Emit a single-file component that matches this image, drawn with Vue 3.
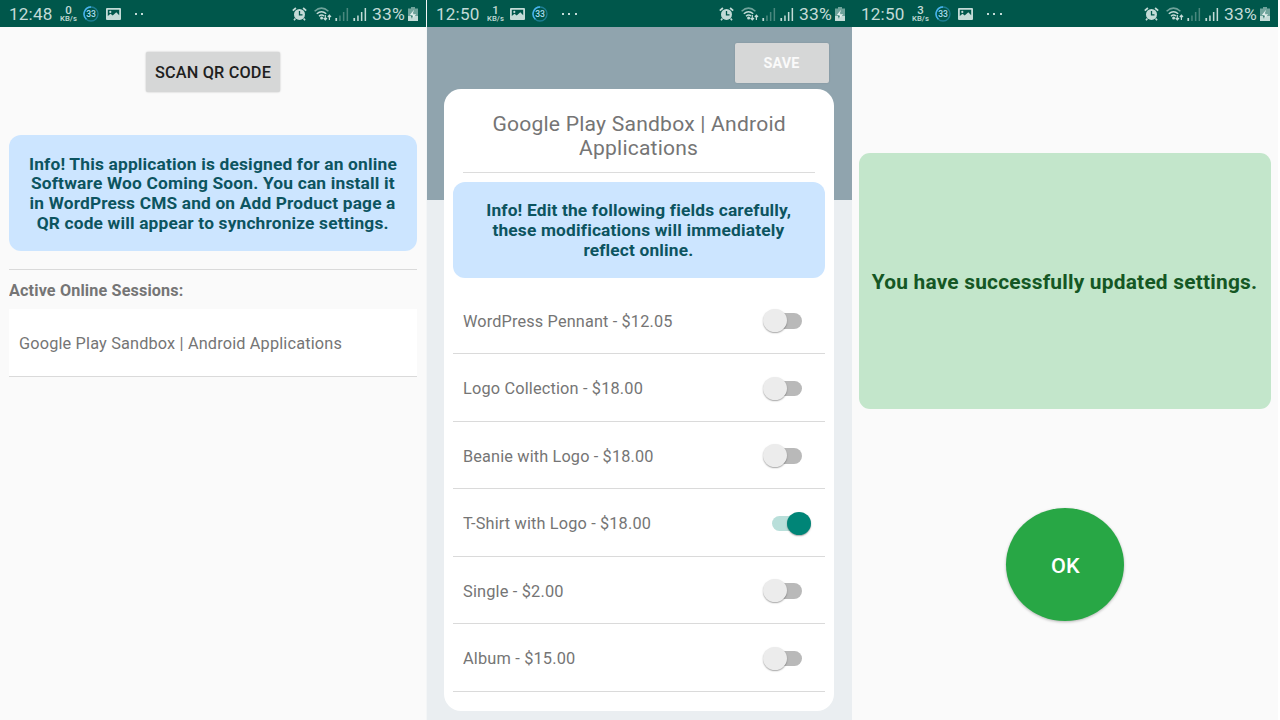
<script setup>
const phones = [
  { time: '12:48', rate: '0', icons: ['ring', 'image'], dots: 2 },
  { time: '12:50', rate: '1', icons: ['image', 'ring'], dots: 3 },
  { time: '12:50', rate: '3', icons: ['ring', 'image'], dots: 3 },
]

const scanInfo = [
  ['Info! This application is designed for an online', 368],
  ['Software Woo Coming Soon. You can install it', 364],
  ['in WordPress CMS and on Add Product page a', 366],
  ['QR code will appear to synchronize settings.', 352],
]
const editInfo = [
  ['Info! Edit the following fields carefully,', 305],
  ['these modifications will immediately', 292],
  ['reflect online.', 110],
]
const products = [
  { label: 'WordPress Pennant - $12.05', width: 209.5, on: false },
  { label: 'Logo Collection - $18.00', width: 180, on: false },
  { label: 'Beanie with Logo - $18.00', width: 190.5, on: false },
  { label: 'T-Shirt with Logo - $18.00', width: 188, on: true },
  { label: 'Single - $2.00', width: 100.7, on: false },
  { label: 'Album - $15.00', width: 112.4, on: false },
]

// Stretches a line of text horizontally to the given width.
const vFit = {
  mounted(el, { value }) {
    const natural = el.getBoundingClientRect().width
    if (natural) el.style.transform = `scaleX(${value / natural})`
  },
}
</script>

<template>
  <main class="board">
    <section v-for="(p, i) in phones" :key="i" class="phone" :class="'phone-' + (i + 1)">
      <header class="status">
        <span class="time"><span v-fit="43.5" class="t">{{ p.time }}</span></span>
        <span class="rate"><b>{{ p.rate }}</b><small><span v-fit="17" class="t">KB/s</span></small></span>
        <span class="notes">
          <template v-for="icon in p.icons" :key="icon">
            <svg v-if="icon === 'ring'" width="16" height="16" viewBox="0 0 16 16">
              <circle cx="8" cy="8" r="7" fill="none" stroke="#1c7d92" stroke-width="1.3" />
              <path d="M3.4 13.2A7 7 0 0 1 8 1" fill="none" stroke="#48b4ee" stroke-width="1.5" />
              <text x="8" y="10.9" text-anchor="middle" class="ring-text">33</text>
            </svg>
            <svg v-else width="15" height="12" viewBox="0 0 15 12">
              <path fill="#c3dbd7" fill-rule="evenodd" d="M1 0h13q1 0 1 1v10q0 1-1 1H1q-1 0-1-1V1q0-1 1-1zM1.8 1.7v6.2l2.7-2.2 2.2 1.8 3.6-3.3 2.9 3.1V1.7z" />
              <circle cx="4.3" cy="3.9" r="1.1" fill="#c3dbd7" />
            </svg>
          </template>
        </span>
        <span class="dots"><i v-for="n in p.dots" :key="n"></i></span>
        <span class="system">
          <svg width="15" height="14" viewBox="0 0 15 14">
            <g fill="none" stroke="#c3dbd7">
              <path d="M.8 3.6 3.9 1M14.2 3.6 11.1 1" stroke-width="1.8" />
              <path d="M3.4 11.5 2 13.3M11.6 11.5 13 13.3" stroke-width="1.6" />
            </g>
            <circle cx="7.5" cy="7.4" r="5.5" fill="#c3dbd7" />
            <path d="M7.5 4v3.8h3" fill="none" stroke="#00574b" stroke-width="1.3" />
          </svg>
          <svg class="wifi" width="18" height="14" viewBox="0 0 18 14">
            <g fill="none" stroke="#c3dbd7" stroke-width="1.5">
              <path d="M.6 4.2Q7.5-2 14.4 4.2" stroke="#6fa39b" />
              <path d="M2.8 6.8Q7.5 2.6 12.2 6.8M5 9.2Q7.5 7 10 9" />
              <path d="M11.3 8v4.7M9.6 11l1.7 1.8 1.7-1.8M15.4 13V8.3M13.8 10l1.6-1.8L17 10" stroke-width="1.2" />
            </g>
            <circle cx="7.6" cy="11.1" r="1.5" fill="#c3dbd7" />
          </svg>
          <svg class="weak" width="14" height="13" viewBox="0 0 14 13">
            <path fill="#c3dbd7" d="M.4 10h1.7v3H.4z" />
            <path fill="#4a887e" d="M4.2 7.5h1.5V13H4.2zM7.9 4h1.5v9H7.9zM11.6 0h1.5v13h-1.5z" />
          </svg>
          <svg class="strong" width="14" height="13" viewBox="0 0 14 13">
            <path fill="#c3dbd7" d="M.4 10h1.7v3H.4zM4.2 7.5h1.5V13H4.2zM7.9 4h1.5v9H7.9zM11.6 0h1.5v13h-1.5z" />
          </svg>
          <span class="percent"><span v-fit="33" class="t">33%</span></span>
          <svg width="10" height="14" viewBox="0 0 10 14">
            <path fill="#6fa39b" d="M3 0h4v1.5h3V9H0V1.5h3z" />
            <path fill="#c3dbd7" d="M0 9h10v5H0z" />
            <path fill="#e2efed" d="M6 2.8 1.9 8h2.7L4 10z M5.2 4.5v2.7h3L4 12z" />
            <path fill="#00574b" d="M3.2 9h1.4L4 12z" />
          </svg>
        </span>
      </header>

      <div v-if="i === 0" class="scan">
        <button class="btn scan-btn"><span v-fit="116" class="t c">SCAN QR CODE</span></button>
        <div class="info scan-info">
          <p v-for="l in scanInfo" :key="l[0]"><span v-fit="l[1]" class="t c">{{ l[0] }}</span></p>
        </div>
        <div class="rule"></div>
        <h2><span v-fit="174.5" class="t">Active Online Sessions:</span></h2>
        <div class="session"><span v-fit="323" class="t">Google Play Sandbox | Android Applications</span></div>
      </div>

      <div v-else-if="i === 1" class="edit">
        <button class="btn save-btn"><span v-fit="36" class="t c">SAVE</span></button>
        <div class="card">
          <h1>
            <span class="line"><span v-fit="293.5" class="t c">Google Play Sandbox | Android</span></span>
            <span class="line"><span v-fit="119" class="t c">Applications</span></span>
          </h1>
          <div class="info edit-info">
            <p v-for="l in editInfo" :key="l[0]"><span v-fit="l[1]" class="t c">{{ l[0] }}</span></p>
          </div>
          <ul>
            <li v-for="p2 in products" :key="p2.label">
              <span v-fit="p2.width" class="t">{{ p2.label }}</span>
              <span class="switch" :class="{ on: p2.on }"><i></i></span>
            </li>
          </ul>
        </div>
      </div>

      <div v-else class="done">
        <div class="success"><span v-fit="385.5" class="t c">You have successfully updated settings.</span></div>
        <button class="ok"><span v-fit="29" class="t c">OK</span></button>
      </div>
    </section>
  </main>
</template>

<style>
html, body { margin: 0; background: #fff; }
</style>

<style scoped>
.board {
  width: 1280px; height: 720px; overflow: hidden; background: #fff;
  display: grid; grid-template-columns: 427px 425px 426px;
  font-family: Roboto, "Liberation Sans", sans-serif; color: #757575;
}
.phone { height: 720px; background: #fafafa; display: flex; flex-direction: column; min-width: 0; }
.phone-1 { box-sizing: border-box; border-right: 1px solid #f4f6f7; }
.phone-2 { background: linear-gradient(#90a4ae 200px, #eaeef1 200px); }
.t { display: inline-block; white-space: nowrap; transform-origin: left center; letter-spacing: .01em; }
.t.c { transform-origin: center; }
p, h1, h2, ul { margin: 0; padding: 0; }
button { border: 0; padding: 0; font-family: inherit; display: flex; align-items: center; justify-content: center; }

.status {
  height: 27px; flex: none; background: #00574b; color: #c3dbd7; box-sizing: border-box;
  padding: 1px 0 0 8.5px; display: flex; align-items: center;
}
.time { width: 51.5px; font-size: 17px; line-height: 26px; }
.rate { width: 17px; display: flex; flex-direction: column; align-items: center; }
.rate b { font-size: 11.5px; line-height: 9px; font-weight: 500; }
.rate small { width: 17px; font-size: 7px; line-height: 8px; font-weight: 500; }
.notes { margin-left: 6px; width: 38.4px; display: flex; align-items: center; justify-content: space-between; }
.notes svg, .system svg { display: block; flex: none; }
.ring-text { font-size: 8.5px; font-weight: 500; fill: #a9dcf0; }
.dots { margin-left: 13.6px; width: 30px; display: flex; gap: 4.4px; }
.dots i { width: 2px; height: 2px; background: #c3dbd7; }
.system { margin-left: 127px; display: flex; align-items: center; }
.wifi { margin-left: 7px; }
.weak { margin-left: 3px; }
.strong { margin-left: 4px; }
.percent { width: 33px; margin: 0 3px 0 5px; font-size: 17px; line-height: 26px; }

.btn { background: #d6d7d7; border-radius: 2px; box-shadow: 0 0 2px rgba(0, 0, 0, .25); }
.scan { padding: 25px 9px 0; display: flex; flex-direction: column; }
.scan-btn { width: 134px; height: 40px; align-self: center; font-size: 16px; font-weight: 500; color: #1f1f1f; }
.info {
  background: #cce5ff; color: #0c5460; border-radius: 12px; box-sizing: border-box;
  font-size: 16.8px; font-weight: 700; line-height: 19.7px; text-align: center;
}
.scan-info { height: 116px; margin-top: 43px; padding-top: 19.7px; }
.info p { height: 19.7px; display: flex; justify-content: center; }
.rule { height: 1px; background: #dadada; margin-top: 18px; }
h2 { height: 39px; font-size: 16px; line-height: 42px; }
.session {
  height: 68px; box-sizing: border-box; padding-left: 10px; border-bottom: 1px solid #dadada;
  background: #fff; font-size: 16px; line-height: 69px;
}

.edit { display: flex; flex-direction: column; padding: 16px 18px 0 16.5px; }
.save-btn { width: 94px; height: 40px; align-self: flex-end; margin-right: 5px; font-size: 14px; font-weight: 700; color: #fafafa; box-shadow: 0 0 2px rgba(0, 0, 0, .12); }
.card { margin-top: 6px; height: 622px; box-sizing: border-box; border-radius: 17px; background: #fff; padding: 24px 9.5px 0; }
h1 {
  height: 60px; margin: 0 9.5px; box-sizing: border-box; border-bottom: 1px solid #dcdcdc;
  font-size: 20px; line-height: 23.6px; font-weight: 400;
}
.line { display: flex; justify-content: center; }
.edit-info { height: 96px; margin-top: 9px; padding-top: 19.4px; }
ul { list-style: none; padding-top: 8.7px; }
li {
  height: 67.5px; box-sizing: border-box; border-bottom: 1px solid #dadada; padding: 2.4px 14px 0 9.8px;
  display: flex; align-items: center; justify-content: space-between; font-size: 16px;
}
.switch { position: relative; width: 30px; height: 15.5px; margin: -.6px 9px 0 0; border-radius: 8px; background: #b9b9b9; }
.switch i {
  position: absolute; left: -8.5px; top: -3.8px; width: 24px; height: 23px; border-radius: 50%;
  background: #ececec; box-shadow: 0 1px 1.5px rgba(0, 0, 0, .35);
}
.switch.on { background: #b9dfda; }
.switch.on i { left: 15px; background: #008577; }

.done { padding: 126px 7px 0; display: flex; flex-direction: column; align-items: center; }
.success {
  width: 412px; height: 256px; box-sizing: border-box; padding-top: 2px; border-radius: 11px; background: #c3e6cb; color: #155724;
  display: flex; align-items: center; justify-content: center; font-size: 20px; font-weight: 700;
}
.ok {
  width: 118px; height: 113px; box-sizing: border-box; padding: 2px 0 0 1px; margin-top: 99px; border-radius: 50%; background: #28a745; color: #fff;
  font-size: 20px; font-weight: 500; box-shadow: 0 1px 3px rgba(0, 0, 0, .28);
}
</style>
